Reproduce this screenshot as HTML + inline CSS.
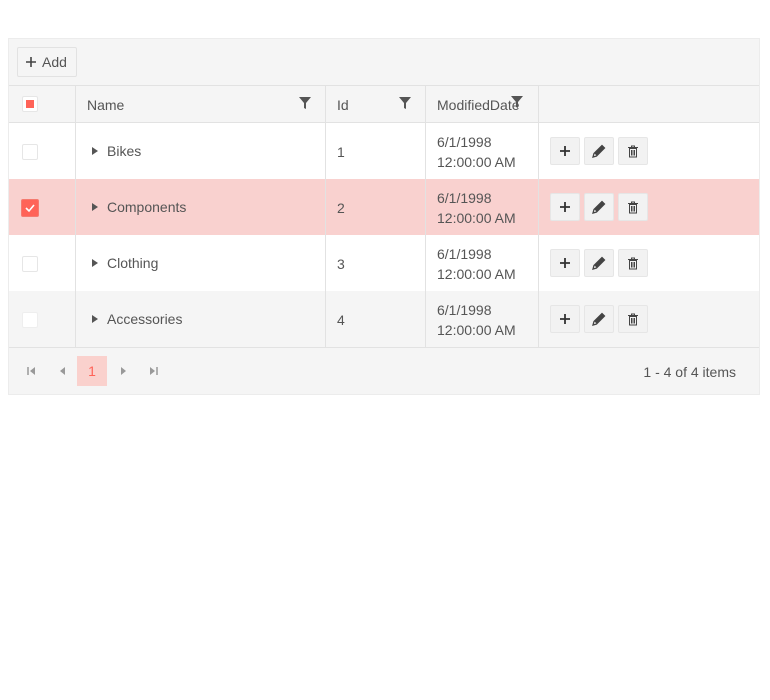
<!DOCTYPE html>
<html><head><style>
*{box-sizing:border-box;margin:0;padding:0}
body{width:770px;height:700px;background:#fff;font-family:"Liberation Sans",sans-serif;font-size:14px;color:#555;position:relative;overflow:hidden}
.grid{position:absolute;left:8px;top:38px;width:752px;height:357px;background:#f5f5f5;border:1px solid #ececec}
.abs{position:absolute}
.btn{position:absolute;width:30px;height:28px;background:#f2f2f2;border:1px solid #e6e6e6;border-radius:2px;display:flex;align-items:center;justify-content:center}
.vl{position:absolute;width:1px;background:#e2e2e2}
.hl{position:absolute;height:1px;background:#e2e2e2;left:0;width:750px}
.cb{position:absolute;left:13px;width:16px;height:16px;border:1px solid #e6e6e6;background:#fff;border-radius:2px}
.tri{position:absolute;left:83px;width:0;height:0;border-left:6px solid #555;border-top:4px solid transparent;border-bottom:4px solid transparent}
</style></head><body>
<div class="grid">
  <div class="abs" style="left:8px;top:8px;width:60px;height:30px;border:1px solid #e2e2e2;border-radius:2px;background:#f5f5f5"></div>
  <svg class="abs" style="left:16px;top:17px" width="12" height="12" viewBox="0 0 12 12"><path d="M6 1V11M1 6H11" stroke="#444" stroke-width="1.6"/></svg>
  <div class="abs" style="left:33px;top:15px;font-size:14px;color:#555">Add</div>
  <div class="hl" style="top:46px"></div>
  <div class="hl" style="top:83px"></div>
  <div class="abs" style="left:0;top:84px;width:750px;height:56px;background:#fff"></div>
  <div class="abs" style="left:0;top:140px;width:750px;height:56px;background:#f9d1cf"></div>
  <div class="abs" style="left:0;top:196px;width:750px;height:56px;background:#fff"></div>
  <div class="abs" style="left:0;top:252px;width:750px;height:56px;background:#f5f5f5"></div>
  <div class="hl" style="top:308px"></div>
  <div class="vl" style="left:66px;top:47px;height:261px"></div>
  <div class="vl" style="left:316px;top:47px;height:261px"></div>
  <div class="vl" style="left:416px;top:47px;height:261px"></div>
  <div class="vl" style="left:529px;top:47px;height:261px"></div>
  <div class="cb" style="top:57px"></div>
  <div class="abs" style="left:17px;top:61px;width:8px;height:8px;background:#ff6358"></div>
  <div class="abs" style="left:78px;top:58px">Name</div>
  <svg class="abs" style="left:290px;top:58px" width="12" height="12" viewBox="0 0 12 12"><path d="M0 0H12L7 6V12L5 11V6Z" fill="#555"/></svg>
  <div class="abs" style="left:328px;top:58px">Id</div>
  <svg class="abs" style="left:390px;top:58px" width="12" height="12" viewBox="0 0 12 12"><path d="M0 0H12L7 6V12L5 11V6Z" fill="#555"/></svg>
  <div class="abs" style="left:428px;top:58px">ModifiedDate</div>
  <svg class="abs" style="left:502px;top:57px" width="12" height="12" viewBox="0 0 12 12"><path d="M0 0H12L7 6V12L5 11V6Z" fill="#555"/></svg>
  <div class="cb" style="top:105px"></div>
  <div class="abs" style="left:12px;top:160px;width:18px;height:18px;background:#ff6358;border-radius:2px;border:1px solid #f57a70"></div>
  <svg class="abs" style="left:15px;top:163px" width="12" height="12" viewBox="0 0 12 12"><path d="M2 6L5 9L10 3" stroke="#fff" stroke-width="1.6" fill="none"/></svg>
  <div class="cb" style="top:217px"></div>
  <div class="cb" style="top:273px;border-color:#eee"></div>
  <div class="tri" style="top:108px"></div><div class="abs" style="left:98px;top:104px">Bikes</div>
  <div class="tri" style="top:164px"></div><div class="abs" style="left:98px;top:160px">Components</div>
  <div class="tri" style="top:220px"></div><div class="abs" style="left:98px;top:216px">Clothing</div>
  <div class="tri" style="top:276px"></div><div class="abs" style="left:98px;top:272px">Accessories</div>
  <div class="abs" style="left:328px;top:105px">1</div>
  <div class="abs" style="left:328px;top:161px">2</div>
  <div class="abs" style="left:328px;top:217px">3</div>
  <div class="abs" style="left:328px;top:273px">4</div>
  <div class="abs" style="left:428px;top:93px;line-height:20px">6/1/1998<br>12:00:00 AM</div>
  <div class="abs" style="left:428px;top:149px;line-height:20px">6/1/1998<br>12:00:00 AM</div>
  <div class="abs" style="left:428px;top:205px;line-height:20px">6/1/1998<br>12:00:00 AM</div>
  <div class="abs" style="left:428px;top:261px;line-height:20px">6/1/1998<br>12:00:00 AM</div>
  <div id="cmds"></div>
  <svg class="abs" style="left:18px;top:327px" width="10" height="10" viewBox="0 0 10 10"><path d="M1 1V9" stroke="#999" stroke-width="1.5"/><path d="M8 1V9L3 5Z" fill="#999"/></svg>
  <svg class="abs" style="left:49px;top:327px" width="10" height="10" viewBox="0 0 10 10"><path d="M7 1V9L2 5Z" fill="#999"/></svg>
  <div class="abs" style="left:68px;top:317px;width:30px;height:30px;background:#fad1cd;color:#ff6358;text-align:center;line-height:30px">1</div>
  <svg class="abs" style="left:109px;top:327px" width="10" height="10" viewBox="0 0 10 10"><path d="M3 1V9L8 5Z" fill="#999"/></svg>
  <svg class="abs" style="left:139px;top:327px" width="10" height="10" viewBox="0 0 10 10"><path d="M2 1V9L7 5Z" fill="#999"/><path d="M9 1V9" stroke="#999" stroke-width="1.5"/></svg>
  <div class="abs" style="right:23px;top:325px">1 - 4 of 4 items</div>
</div>
<script>
var h='';[0,1,2,3].forEach(function(i){var t=98+i*56;
h+='<div class="btn" style="left:541px;top:'+t+'px"><svg width="12" height="12" viewBox="0 0 12 12"><path d="M6 1V11M1 6H11" stroke="#333" stroke-width="1.8"/></svg></div>';
h+='<div class="btn" style="left:575px;top:'+t+'px"><svg width="16" height="16" viewBox="0 0 16 16"><path d="M2 14L3 10.5L11 2.5L13.5 5L5.5 13Z" fill="none" stroke="#444" stroke-width="1.3"/><path d="M3.5 10.5L11 3L13 5L5.5 12.5Z" fill="#444"/></svg></div>';
h+='<div class="btn" style="left:609px;top:'+t+'px"><svg width="12" height="13" viewBox="0 0 12 13"><path d="M1 2.5H11M4.5 2.5V1H7.5V2.5M2.5 3.5H9.5V12H2.5Z" stroke="#444" fill="none"/><path d="M4.5 5V10.5M6 5V10.5M7.5 5V10.5" stroke="#444"/></svg></div>';});
document.getElementById('cmds').innerHTML=h;
</script>
</body></html>
